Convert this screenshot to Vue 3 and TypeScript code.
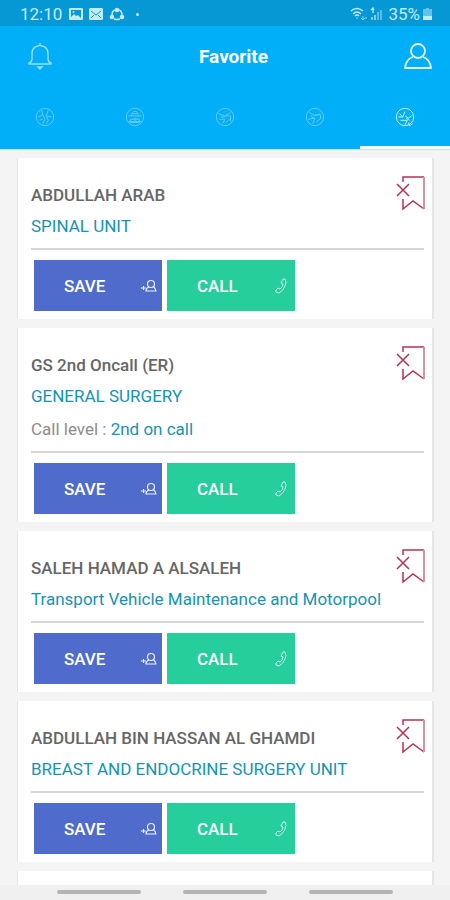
<script setup lang="ts">
import { ref } from 'vue'

interface Contact {
  name: string
  unit: string
  level?: string
}

const contacts = ref<Contact[]>([
  { name: 'ABDULLAH ARAB', unit: 'SPINAL UNIT' },
  { name: 'GS 2nd Oncall (ER)', unit: 'GENERAL SURGERY', level: '2nd on call' },
  { name: 'SALEH HAMAD A ALSALEH', unit: 'Transport Vehicle Maintenance and Motorpool' },
  { name: 'ABDULLAH BIN HASSAN AL GHAMDI', unit: 'BREAST AND ENDOCRINE SURGERY UNIT' },
])

const tabs: string[] = [
  'M6 3l1 4-4 2M7 7l2 4-2 4M12 3l-2 5 5 1M10 8l2 4-2 3M4 12l3-1',
  'M3 8h12M5 11h8v3H5zM6 8q0-4 3-4t3 4M3 13h12M9 10v4M7 6h4',
  'M3 6l6 2 5-3M4 11h5l-2 4M9 8h5v5M10 14l4-4M5 9h4',
  'M4 5l5 3 5-2M3 11l6-1-2 5M9 7h5v4M10 14l4-4M5 8l3 2',
  'M3 9h4l2-5M5 12h6l-2 4M9 8l3 2 3-2M13 12l-3-2M4 6l3 3',
]
const activeTab = ref(4)
</script>

<template>
  <div class="screen">
    <div class="status">
      <span class="clock">12:10</span>
      <svg class="glyph" width="14" height="14" viewBox="0 0 14 14" aria-hidden="true">
        <path fill="currentColor" fill-rule="evenodd" d="M1 1h12q1 0 1 1v10q0 1-1 1H1q-1 0-1-1V2q0-1 1-1zM2 3v7l3-3 2 2 2-1 3 3V3z" />
        <circle cx="4.500" cy="5" r="1" fill="currentColor" />
      </svg>
      <svg class="glyph" width="14" height="14" viewBox="0 0 14 14" aria-hidden="true">
        <rect y="1" width="14" height="12" rx="1" fill="currentColor" />
        <path d="M2 4l5 4 5-4M2 11l3-3M12 11L9 8" fill="none" stroke="#0698d4" />
      </svg>
      <svg class="glyph" width="16" height="14" viewBox="0 0 16 14" aria-hidden="true">
        <path d="M6 3Q3 4 3 8M10 3q3 1 3 5M5 12q3 1 6 0" fill="none" stroke="currentColor" stroke-width="1.500" />
        <g fill="currentColor"><circle cx="8" cy="3" r="2.300" /><circle cx="3" cy="10" r="2.300" /><circle cx="13" cy="10" r="2.300" /></g>
      </svg>
      <span class="dot"></span>
      <span class="grow"></span>
      <svg width="18" height="14" viewBox="0 0 18 14" fill="none" stroke="currentColor" aria-hidden="true">
        <path d="M1 4q6-5 12 0M3 7q4-4 8 0M5 9q2-2 4 0" stroke-width="1.400" />
        <path d="M7 10v2M13 9v3M11 11l2 2 2-2M16 12v-2" opacity=".7" />
      </svg>
      <svg class="signal" width="13" height="14" viewBox="0 0 13 14" fill="none" stroke="currentColor" aria-hidden="true">
        <path d="M3 1v5M1 3l2-2 1 2M2 13v-3M5 13V8" stroke-width="1.300" />
        <path d="M8 13V5M11 13V3" opacity=".6" stroke-width="1.500" />
      </svg>
      <span>35%</span>
      <svg class="battery" width="9" height="14" viewBox="0 0 9 14" fill="currentColor" aria-hidden="true">
        <path d="M3 1h3v1h3v7H0V2h3z" opacity=".5" /><path d="M0 9h9v4H0z" />
      </svg>
    </div>

    <header class="header">
      <div class="bar">
        <button class="plain" aria-label="Notifications">
          <svg width="26" height="28" viewBox="0 0 26 28" fill="none" stroke="currentColor" stroke-width="1.400" opacity=".6">
            <path d="M11 4Q5 5 5 12v5q0 3-3 4v1h22v-1q-3-1-3-4v-5q0-7-6-8M13 1v2M11 4l2-1 2 1M11 25l2 2 2-2z" />
          </svg>
        </button>
        <h1>Favorite</h1>
        <button class="plain" aria-label="Profile">
          <svg width="28" height="28" viewBox="0 0 28 28" fill="none" stroke="currentColor" stroke-width="1.800" opacity=".9">
            <circle cx="14" cy="9" r="7" />
            <path d="M9 15Q2 17 1 26h26q-1-9-8-11" stroke-linejoin="round" />
          </svg>
        </button>
      </div>
      <nav class="tabs" aria-label="Sections">
        <button
          v-for="(art, i) in tabs"
          :key="i"
          :class="['tab', { active: i === activeTab }]"
          :aria-label="`Tab ${i + 1}`"
          @click="activeTab = i"
        >
          <svg width="20" height="20" viewBox="0 0 18 18" fill="none" stroke="currentColor" stroke-width=".9">
            <circle cx="9" cy="9" r="7.800" />
            <path :d="art" />
            <path v-if="i === 4" d="M12 14l1 3 3-2" />
          </svg>
        </button>
      </nav>
    </header>

    <main class="list">
      <article v-for="contact in contacts" :key="contact.name" class="card">
        <div class="top">
          <div class="info">
            <h2>{{ contact.name }}</h2>
            <p class="unit">{{ contact.unit }}</p>
            <p v-if="contact.level" class="level">Call level : <span>{{ contact.level }}</span></p>
          </div>
          <button class="plain remove" aria-label="Remove from favorites">
            <svg width="30" height="36" viewBox="0 0 30 36" fill="none" stroke="#b8324d" stroke-width="1.500">
              <path d="M7 6V1h21M7 23v10l10-8 11 8M1 8l12 12M13 8L1 20" />
              <path d="M28 1v32" stroke="#d9929f" stroke-width="2" />
            </svg>
          </button>
        </div>
        <div class="actions">
          <button class="action save">
            <span>SAVE</span>
            <svg width="16" height="14" viewBox="0 0 16 14" fill="none" stroke="currentColor" stroke-width="1.200" opacity=".9">
              <circle cx="10" cy="5" r="3.500" />
              <path d="M8 8Q5 9 5 12h10q0-2-3-5M0 9h5M2.500 7v4" />
            </svg>
          </button>
          <button class="action call">
            <span>CALL</span>
            <svg width="12" height="16" viewBox="0 0 12 16" fill="none" stroke="currentColor" stroke-width="1" opacity=".75">
              <path d="M8 1l2 0q2 3 0 7-2 5-6 7l-3-1 0-2 2-2 2 1q3-2 3-5l-2-1z" />
            </svg>
          </button>
        </div>
      </article>
      <article class="card"></article>
    </main>

    <footer class="navbar"><span></span><span></span><span></span></footer>
  </div>
</template>

<style>
body {
  margin: 0;
}
</style>

<style scoped>
.screen {
  display: flex;
  flex-direction: column;
  height: 100vh;
  overflow: hidden;
  background: #f4f4f4;
  font-family: Roboto, 'Liberation Sans', sans-serif;
}
button {
  border: 0;
  padding: 0;
  font: inherit;
  color: inherit;
  cursor: pointer;
}
svg {
  display: block;
  flex: none;
}
.plain {
  background: none;
}
.status {
  display: flex;
  align-items: center;
  height: 26px;
  padding: 2px 18px 0 20px;
  box-sizing: border-box;
  background: #0698d4;
  color: #c3eaf7;
  font-size: 17px;
}
.clock {
  margin-right: 7px;
}
.glyph {
  margin-right: 6px;
}
.dot {
  width: 3px;
  height: 3px;
  margin-left: 5px;
  border-radius: 2px;
  background: currentColor;
}
.grow {
  flex: 1;
}
.signal {
  margin: 0 5px 0 2px;
}
.battery {
  margin-left: 3px;
}
.header {
  background: #00aff8;
  color: #fff;
  border-bottom: 1px solid #b5e7fb;
}
.bar {
  display: flex;
  align-items: center;
  justify-content: space-between;
  height: 60px;
  padding: 0 18px 0 27px;
}
h1 {
  margin: 0;
  padding-left: 10px;
  font-size: 19px;
  font-weight: 700;
}
.tabs {
  display: grid;
  grid-template-columns: repeat(5, 1fr);
}
.tab {
  display: flex;
  justify-content: center;
  height: 63px;
  padding-top: 21px;
  box-sizing: border-box;
  background: none;
  color: #62cbee;
  border-bottom: 3px solid transparent;
}
.tab.active {
  color: #c5eef0;
  border-bottom-color: #fff;
}
.list {
  flex: 1;
  min-height: 0;
  overflow: hidden;
  display: flex;
  flex-direction: column;
  gap: 9px;
  padding: 8px 16px 0 17px;
}
.card {
  flex: none;
  min-height: 161px;
  box-sizing: border-box;
  padding: 18px 8px 8px 13px;
  background: #fff;
  border: solid #e6e6e6;
  border-width: 0 2px 0 1px;
}
.top {
  display: flex;
  justify-content: space-between;
  padding-bottom: 10px;
  border-bottom: 2px solid #d6d6d6;
}
.info {
  padding-top: 8px;
}
.remove {
  align-self: flex-start;
  margin-right: -2px;
}
h2,
p {
  margin: 0;
  font-size: 17px;
  line-height: 23px;
  white-space: nowrap;
}
h2 {
  font-weight: 500;
  color: #666;
}
.unit {
  margin-top: 8px;
  color: #1593b2;
}
.level {
  margin-top: 10px;
  color: #8c8c8c;
}
.level span {
  color: #1593b2;
}
.actions {
  display: flex;
  gap: 5px;
  padding: 10px 0 0 3px;
}
.action {
  display: flex;
  align-items: center;
  justify-content: space-between;
  width: 128px;
  height: 51px;
  padding: 0 5px 0 30px;
  box-sizing: border-box;
  color: #fff;
  font-size: 17px;
  font-weight: 500;
}
.save {
  background: #4f6bcb;
}
.call {
  padding-right: 8px;
  background: #25ce9a;
}
.navbar {
  display: flex;
  justify-content: center;
  gap: 42px;
  height: 15px;
  padding-top: 5px;
  box-sizing: border-box;
  background: #f0f0f0;
}
.navbar span {
  width: 84px;
  height: 4px;
  border-radius: 2px;
  background: #b4b4b4;
}
</style>
